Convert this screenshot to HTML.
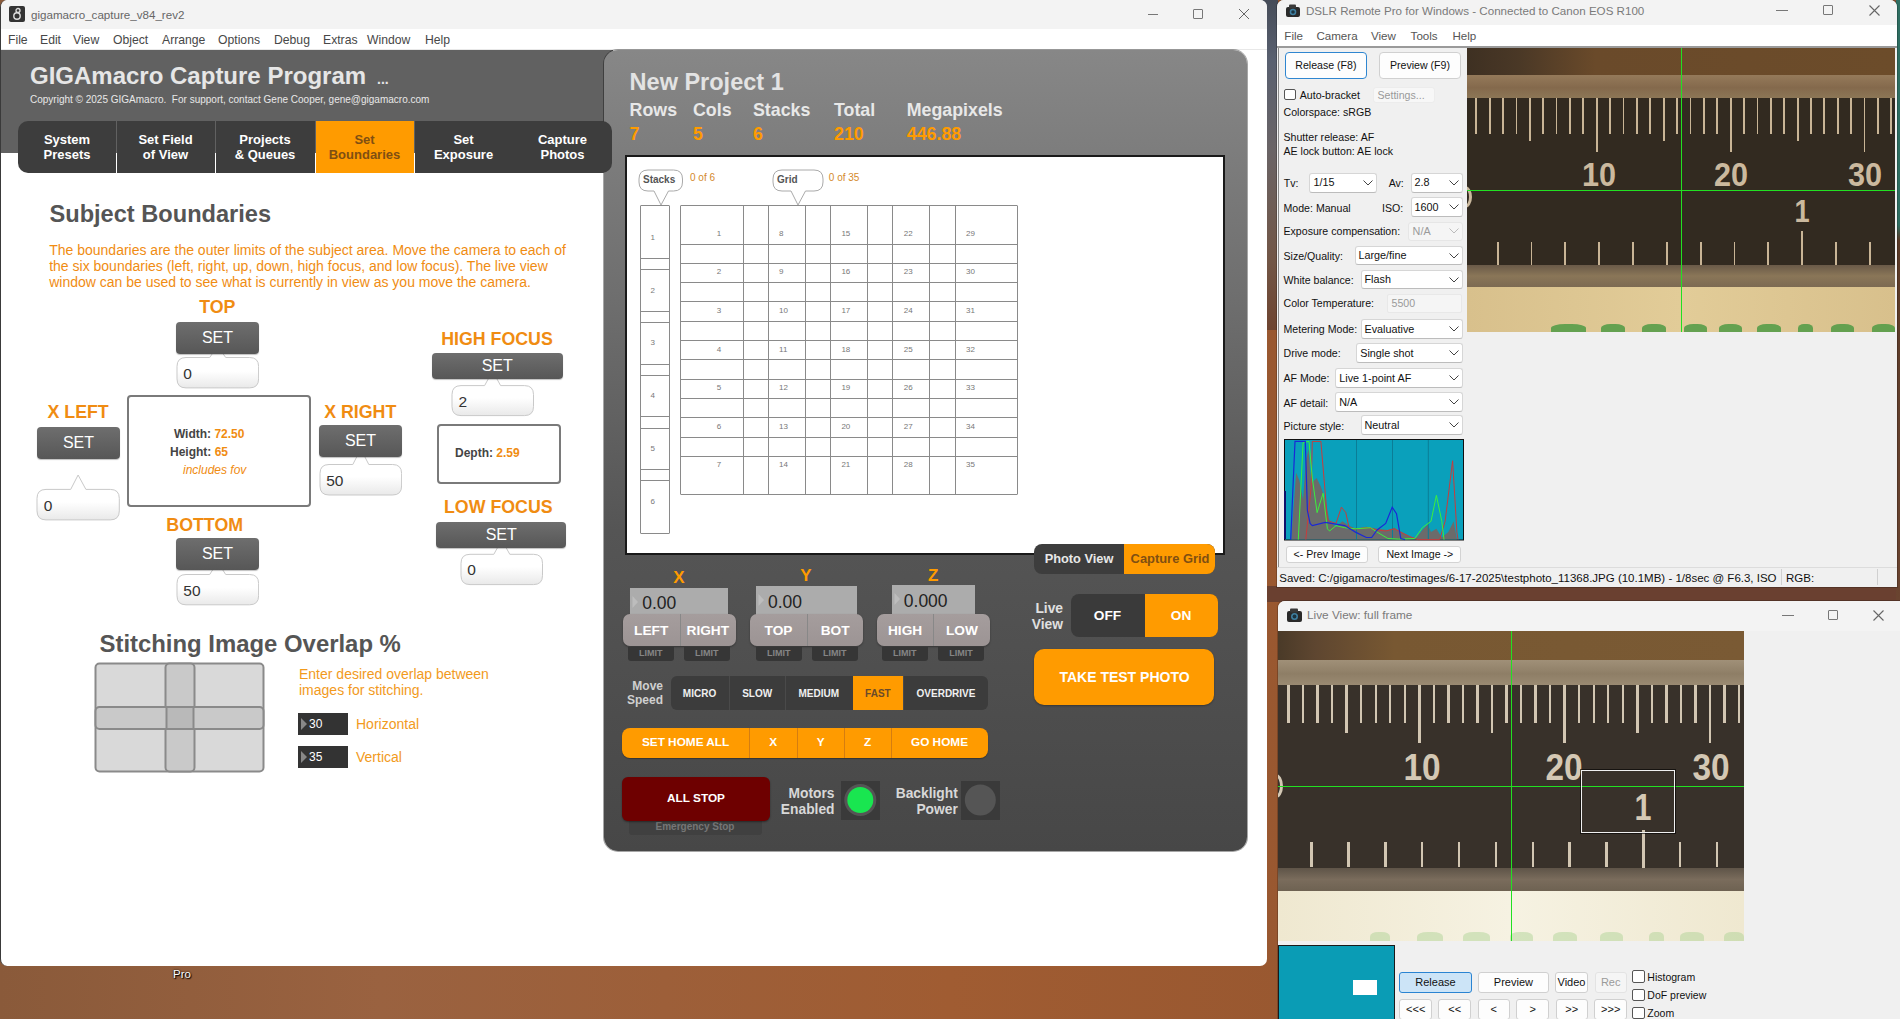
<!DOCTYPE html><html><head><meta charset="utf-8"><style>
*{box-sizing:border-box;margin:0;padding:0}
html,body{width:1900px;height:1019px;overflow:hidden}
body{position:relative;font-family:"Liberation Sans",sans-serif;background:#7e4e30}
.a{position:absolute}
.t{white-space:nowrap;line-height:1}
</style></head><body>
<div class="a" style="left:0px;top:0px;width:1900px;height:1019px;background:linear-gradient(90deg,#8a5a3a 0%,#9a6240 20%,#a05c32 50%,#94552f 80%,#8a5232 100%)"></div>
<div class="a" style="left:1267px;top:586px;width:633px;height:16px;background:#6a4030"></div>
<div class="a" style="left:1255px;top:0px;width:23px;height:330px;background:linear-gradient(180deg,#464c58 0px,#596070 60px,#6a6466 150px,#725646 260px,#6e4430 330px)"></div>
<div class="a t" style="left:173.0px;top:968.9px;font-size:11.5px;color:#fff;text-shadow:0 0 2px #000,1px 1px 1px #000">Pro</div>
<div class="a" style="left:0px;top:0px;width:1267px;height:966px;background:#fff;border-radius:7px;border-left:1px solid #3a3a3a;overflow:hidden"></div>
<div class="a" style="left:1px;top:0px;width:1266px;height:29.5px;background:#f3f3f3;border-radius:7px 7px 0 0"></div>
<div class="a" style="left:9px;top:6px;width:16px;height:16px;background:#333;border-radius:2px"></div>
<svg class="a" style="left:9px;top:6px" width="16" height="16"><circle cx="8" cy="10" r="3.2" fill="none" stroke="#ddd" stroke-width="1.4"/><circle cx="9" cy="4.5" r="2" fill="none" stroke="#ddd" stroke-width="1.3"/></svg>
<div class="a t" style="left:31.0px;top:9.1px;font-size:11.6px;color:#666">gigamacro_capture_v84_rev2</div>
<div class="a" style="left:1148px;top:14px;width:10px;height:1px;background:#777"></div>
<div class="a" style="left:1193px;top:9px;width:10px;height:10px;border:1px solid #777;border-radius:1px"></div>
<svg class="a" style="left:1239px;top:9px" width="10" height="10"><path d="M0 0L10 10M10 0L0 10" stroke="#666" stroke-width="1"/></svg>
<div class="a" style="left:1px;top:29px;width:1266px;height:20px;background:#fff"></div>
<div class="a t" style="left:8.0px;top:33.7px;font-size:12.2px;color:#474747">File</div>
<div class="a t" style="left:40.0px;top:33.7px;font-size:12.2px;color:#474747">Edit</div>
<div class="a t" style="left:73.0px;top:33.7px;font-size:12.2px;color:#474747">View</div>
<div class="a t" style="left:113.0px;top:33.7px;font-size:12.2px;color:#474747">Object</div>
<div class="a t" style="left:162.0px;top:33.7px;font-size:12.2px;color:#474747">Arrange</div>
<div class="a t" style="left:218.0px;top:33.7px;font-size:12.2px;color:#474747">Options</div>
<div class="a t" style="left:274.0px;top:33.7px;font-size:12.2px;color:#474747">Debug</div>
<div class="a t" style="left:323.0px;top:33.7px;font-size:12.2px;color:#474747">Extras</div>
<div class="a t" style="left:367.0px;top:33.7px;font-size:12.2px;color:#474747">Window</div>
<div class="a t" style="left:425.0px;top:33.7px;font-size:12.2px;color:#474747">Help</div>
<div class="a" style="left:1px;top:49px;width:1266px;height:1px;background:#e8e8e8"></div>
<div class="a" style="left:1px;top:50px;width:612px;height:103px;background:#616161"></div>
<div class="a t" style="left:30.0px;top:63.9px;font-size:24px;font-weight:bold;color:#e6e6e6">GIGAmacro Capture Program</div>
<div class="a t" style="left:377.0px;top:72.3px;font-size:14px;font-weight:bold;color:#e6e6e6">...</div>
<div class="a t" style="left:30.0px;top:94.9px;font-size:10px;color:#e8e8e8">Copyright &copy; 2025 GIGAmacro.&nbsp; For support, contact Gene Cooper, gene@gigamacro.com</div>
<div class="a" style="left:18px;top:121px;width:98px;height:52px;background:#3d3d3d;border-radius:10px 0 0 10px;"></div>
<div class="a t" style="left:17.0px;top:133.1px;width:100px;text-align:center;font-size:13px;font-weight:bold;color:#fff">System</div>
<div class="a t" style="left:17.0px;top:148.2px;width:100px;text-align:center;font-size:13px;font-weight:bold;color:#fff">Presets</div>
<div class="a" style="left:117px;top:121px;width:98px;height:52px;background:#3d3d3d;"></div>
<div class="a t" style="left:115.5px;top:133.1px;width:100px;text-align:center;font-size:13px;font-weight:bold;color:#fff">Set Field</div>
<div class="a t" style="left:115.5px;top:148.2px;width:100px;text-align:center;font-size:13px;font-weight:bold;color:#fff">of View</div>
<div class="a" style="left:216px;top:121px;width:99px;height:52px;background:#3d3d3d;"></div>
<div class="a t" style="left:215.0px;top:133.1px;width:100px;text-align:center;font-size:13px;font-weight:bold;color:#fff">Projects</div>
<div class="a t" style="left:215.0px;top:148.2px;width:100px;text-align:center;font-size:13px;font-weight:bold;color:#fff">&amp; Queues</div>
<div class="a" style="left:316px;top:121px;width:98px;height:52px;background:#ff9b00;"></div>
<div class="a t" style="left:314.5px;top:133.1px;width:100px;text-align:center;font-size:13px;font-weight:bold;color:#7f4f12">Set</div>
<div class="a t" style="left:314.5px;top:148.2px;width:100px;text-align:center;font-size:13px;font-weight:bold;color:#7f4f12">Boundaries</div>
<div class="a" style="left:415px;top:121px;width:98px;height:52px;background:#3d3d3d;"></div>
<div class="a t" style="left:413.5px;top:133.1px;width:100px;text-align:center;font-size:13px;font-weight:bold;color:#fff">Set</div>
<div class="a t" style="left:413.5px;top:148.2px;width:100px;text-align:center;font-size:13px;font-weight:bold;color:#fff">Exposure</div>
<div class="a" style="left:514px;top:121px;width:98px;height:52px;background:#3d3d3d;border-radius:0 10px 10px 0;"></div>
<div class="a t" style="left:512.5px;top:133.1px;width:100px;text-align:center;font-size:13px;font-weight:bold;color:#fff">Capture</div>
<div class="a t" style="left:512.5px;top:148.2px;width:100px;text-align:center;font-size:13px;font-weight:bold;color:#fff">Photos</div>
<div class="a t" style="left:49.5px;top:203.2px;font-size:23.6px;font-weight:bold;color:#555">Subject Boundaries</div>
<div class="a t" style="left:49.2px;top:243.0px;font-size:14px;color:#f08c12">The boundaries are the outer limits of the subject area. Move the camera to each of</div>
<div class="a t" style="left:49.2px;top:259.0px;font-size:14px;color:#f08c12">the six boundaries (left, right, up, down, high focus, and low focus). The live view</div>
<div class="a t" style="left:49.2px;top:275.0px;font-size:14px;color:#f08c12">window can be used to see what is currently in view as you move the camera.</div>
<div class="a t" style="left:117.3px;top:298.5px;width:200px;text-align:center;font-size:17.8px;font-weight:bold;color:#f08c12">TOP</div>
<svg class="a" style="left:175.8px;top:345px" width="83.59999999999997" height="43.89999999999998"><defs><linearGradient id="bg176357" x1="0" y1="0" x2="0" y2="1"><stop offset="0.6" stop-color="#fff"/><stop offset="1" stop-color="#e9e9e9"/></linearGradient></defs><path d="M10.0 12.5 L33.7 12.5 L41.7 1.0 L49.7 12.5 L73.6 12.5 Q82.6 12.5 82.6 21.5 L82.6 33.9 Q82.6 42.9 73.6 42.9 L10.0 42.9 Q1.0 42.9 1.0 33.9 L1.0 21.5 Q1.0 12.5 10.0 12.5 Z" fill="url(#bg176357)" stroke="#c9c9c9" stroke-width="1"/></svg>
<div class="a t" style="left:183.3px;top:365.6px;font-size:15.5px;color:#333">0</div>
<div class="a" style="left:176px;top:322px;width:83px;height:32px;background:linear-gradient(180deg,#6e6e6e,#575757);border-radius:4px;box-shadow:0 1px 1px rgba(0,0,0,.25)"></div>
<div class="a t" style="left:167.5px;top:330.2px;width:100px;text-align:center;font-size:16px;color:#fff">SET</div>
<div class="a t" style="left:-21.9px;top:403.7px;width:200px;text-align:center;font-size:17.8px;font-weight:bold;color:#f08c12">X LEFT</div>
<div class="a" style="left:37px;top:427px;width:83px;height:32px;background:linear-gradient(180deg,#6e6e6e,#575757);border-radius:4px;box-shadow:0 1px 1px rgba(0,0,0,.25)"></div>
<div class="a t" style="left:28.5px;top:435.2px;width:100px;text-align:center;font-size:16px;color:#fff">SET</div>
<svg class="a" style="left:36.3px;top:474.3px" width="84.3" height="46.900000000000034"><defs><linearGradient id="bg37489" x1="0" y1="0" x2="0" y2="1"><stop offset="0.6" stop-color="#fff"/><stop offset="1" stop-color="#e9e9e9"/></linearGradient></defs><path d="M10.0 15.4 L34.7 15.4 L42.1 1.0 L49.9 15.4 L74.3 15.4 Q83.3 15.4 83.3 24.4 L83.3 36.9 Q83.3 45.9 74.3 45.9 L10.0 45.9 Q1.0 45.9 1.0 36.9 L1.0 24.4 Q1.0 15.4 10.0 15.4 Z" fill="url(#bg37489)" stroke="#c9c9c9" stroke-width="1"/></svg>
<div class="a t" style="left:43.8px;top:497.9px;font-size:15.5px;color:#333">0</div>
<div class="a" style="left:126.6px;top:395.4px;width:184px;height:112px;border:2px solid #7a7a7a;border-radius:4px"></div>
<div class="a t" style="left:173.9px;top:428.3px;font-size:12px;font-weight:bold;color:#444">Width: <span style="color:#f08c12">72.50</span></div>
<div class="a t" style="left:170.0px;top:446.1px;font-size:12px;font-weight:bold;color:#444">Height: <span style="color:#f08c12">65</span></div>
<div class="a t" style="left:183.0px;top:463.5px;font-size:12px;font-style:italic;color:#f08c12">includes fov</div>
<div class="a t" style="left:260.2px;top:403.7px;width:200px;text-align:center;font-size:17.8px;font-weight:bold;color:#f08c12">X RIGHT</div>
<svg class="a" style="left:318.7px;top:448px" width="83.60000000000002" height="48"><defs><linearGradient id="bg319464" x1="0" y1="0" x2="0" y2="1"><stop offset="0.6" stop-color="#fff"/><stop offset="1" stop-color="#e9e9e9"/></linearGradient></defs><path d="M10.0 16.5 L33.8 16.5 L41.8 1.0 L49.8 16.5 L73.6 16.5 Q82.6 16.5 82.6 25.5 L82.6 38.0 Q82.6 47.0 73.6 47.0 L10.0 47.0 Q1.0 47.0 1.0 38.0 L1.0 25.5 Q1.0 16.5 10.0 16.5 Z" fill="url(#bg319464)" stroke="#c9c9c9" stroke-width="1"/></svg>
<div class="a t" style="left:326.2px;top:472.7px;font-size:15.5px;color:#333">50</div>
<div class="a" style="left:319px;top:425px;width:83px;height:32px;background:linear-gradient(180deg,#6e6e6e,#575757);border-radius:4px;box-shadow:0 1px 1px rgba(0,0,0,.25)"></div>
<div class="a t" style="left:310.5px;top:433.2px;width:100px;text-align:center;font-size:16px;color:#fff">SET</div>
<div class="a t" style="left:104.7px;top:516.5px;width:200px;text-align:center;font-size:17.8px;font-weight:bold;color:#f08c12">BOTTOM</div>
<svg class="a" style="left:175.8px;top:561px" width="83.59999999999997" height="44.799999999999955"><defs><linearGradient id="bg176574" x1="0" y1="0" x2="0" y2="1"><stop offset="0.6" stop-color="#fff"/><stop offset="1" stop-color="#e9e9e9"/></linearGradient></defs><path d="M10.0 13.5 L33.7 13.5 L41.7 1.0 L49.7 13.5 L73.6 13.5 Q82.6 13.5 82.6 22.5 L82.6 34.8 Q82.6 43.8 73.6 43.8 L10.0 43.8 Q1.0 43.8 1.0 34.8 L1.0 22.5 Q1.0 13.5 10.0 13.5 Z" fill="url(#bg176574)" stroke="#c9c9c9" stroke-width="1"/></svg>
<div class="a t" style="left:183.3px;top:582.6px;font-size:15.5px;color:#333">50</div>
<div class="a" style="left:176px;top:538px;width:83px;height:32px;background:linear-gradient(180deg,#6e6e6e,#575757);border-radius:4px;box-shadow:0 1px 1px rgba(0,0,0,.25)"></div>
<div class="a t" style="left:167.5px;top:546.2px;width:100px;text-align:center;font-size:16px;color:#fff">SET</div>
<div class="a t" style="left:397.0px;top:331.2px;width:200px;text-align:center;font-size:17.8px;font-weight:bold;color:#f08c12">HIGH FOCUS</div>
<svg class="a" style="left:450.9px;top:370px" width="83.5" height="46.60000000000002"><defs><linearGradient id="bg451385" x1="0" y1="0" x2="0" y2="1"><stop offset="0.6" stop-color="#fff"/><stop offset="1" stop-color="#e9e9e9"/></linearGradient></defs><path d="M10.0 15.6 L33.6 15.6 L41.6 1.0 L49.6 15.6 L73.5 15.6 Q82.5 15.6 82.5 24.6 L82.5 36.6 Q82.5 45.6 73.5 45.6 L10.0 45.6 Q1.0 45.6 1.0 36.6 L1.0 24.6 Q1.0 15.6 10.0 15.6 Z" fill="url(#bg451385)" stroke="#c9c9c9" stroke-width="1"/></svg>
<div class="a t" style="left:458.4px;top:393.5px;font-size:15.5px;color:#333">2</div>
<div class="a" style="left:432px;top:353px;width:130.5px;height:26px;background:linear-gradient(180deg,#6e6e6e,#575757);border-radius:4px;box-shadow:0 1px 1px rgba(0,0,0,.25)"></div>
<div class="a t" style="left:447.2px;top:358.2px;width:100px;text-align:center;font-size:16px;color:#fff">SET</div>
<div class="a" style="left:436.5px;top:424.4px;width:124px;height:60px;border:2px solid #7a7a7a;border-radius:4px"></div>
<div class="a t" style="left:455.0px;top:447.1px;font-size:12px;font-weight:bold;color:#444">Depth: <span style="color:#f08c12">2.59</span></div>
<div class="a t" style="left:398.3px;top:499.2px;width:200px;text-align:center;font-size:17.8px;font-weight:bold;color:#f08c12">LOW FOCUS</div>
<svg class="a" style="left:459.7px;top:539px" width="83.50000000000006" height="46.60000000000002"><defs><linearGradient id="bg460554" x1="0" y1="0" x2="0" y2="1"><stop offset="0.6" stop-color="#fff"/><stop offset="1" stop-color="#e9e9e9"/></linearGradient></defs><path d="M10.0 15.3 L33.8 15.3 L41.8 1.0 L49.8 15.3 L73.5 15.3 Q82.5 15.3 82.5 24.3 L82.5 36.6 Q82.5 45.6 73.5 45.6 L10.0 45.6 Q1.0 45.6 1.0 36.6 L1.0 24.3 Q1.0 15.3 10.0 15.3 Z" fill="url(#bg460554)" stroke="#c9c9c9" stroke-width="1"/></svg>
<div class="a t" style="left:467.2px;top:562.4px;font-size:15.5px;color:#333">0</div>
<div class="a" style="left:436px;top:522.3px;width:130.39999999999998px;height:25.40000000000009px;background:linear-gradient(180deg,#6e6e6e,#575757);border-radius:4px;box-shadow:0 1px 1px rgba(0,0,0,.25)"></div>
<div class="a t" style="left:451.2px;top:527.2px;width:100px;text-align:center;font-size:16px;color:#fff">SET</div>
<div class="a t" style="left:99.5px;top:632.4px;font-size:23.9px;font-weight:bold;color:#555">Stitching Image Overlap %</div>
<svg class="a" style="left:94px;top:662px" width="172" height="112">
<rect x="1.5" y="1.5" width="168" height="108" rx="4" fill="#d9d9d9" stroke="#8a8a8a" stroke-width="2"/>
<rect x="71.5" y="1.5" width="29" height="108" rx="4" fill="#c9c9c9" stroke="#8a8a8a" stroke-width="2"/>
<rect x="1.5" y="45" width="168" height="22" rx="4" fill="#c9c9c9" stroke="#8a8a8a" stroke-width="2"/>
<rect x="72.5" y="46" width="27" height="20" fill="#b9b9b9"/>
<line x1="72.5" y1="45" x2="72.5" y2="67" stroke="#8a8a8a" stroke-width="2"/>
<line x1="99.5" y1="45" x2="99.5" y2="67" stroke="#8a8a8a" stroke-width="2"/>
</svg>
<div class="a t" style="left:299.0px;top:667.2px;font-size:14px;color:#f29a1c">Enter desired overlap between</div>
<div class="a t" style="left:299.0px;top:682.8px;font-size:14px;color:#f29a1c">images for stitching.</div>
<div class="a" style="left:298px;top:713px;width:50px;height:22px;background:#333"></div>
<svg class="a" style="left:300px;top:718px" width="8" height="12"><path d="M1 0L7 6L1 12Z" fill="#888"/></svg>
<div class="a t" style="left:309.0px;top:718.1px;font-size:12px;color:#fff">30</div>
<div class="a t" style="left:356.0px;top:717.2px;font-size:14px;color:#f29a1c">Horizontal</div>
<div class="a" style="left:298px;top:746px;width:50px;height:22px;background:#333"></div>
<svg class="a" style="left:300px;top:751px" width="8" height="12"><path d="M1 0L7 6L1 12Z" fill="#888"/></svg>
<div class="a t" style="left:309.0px;top:751.1px;font-size:12px;color:#fff">35</div>
<div class="a t" style="left:356.0px;top:750.2px;font-size:14px;color:#f29a1c">Vertical</div>
<div class="a" style="left:604px;top:50px;width:643px;height:801px;background:linear-gradient(180deg,#878787 0%,#6f6f6f 30%,#555 60%,#474747 100%);border-radius:14px;box-shadow:0 0 0 1px rgba(0,0,0,.35)"></div>
<div class="a" style="left:513px;top:121px;width:99px;height:52px;background:#3d3d3d;border-radius:0 10px 10px 0"></div>
<div class="a t" style="left:512.5px;top:133.1px;width:100px;text-align:center;font-size:13px;font-weight:bold;color:#fff">Capture</div>
<div class="a t" style="left:512.5px;top:148.2px;width:100px;text-align:center;font-size:13px;font-weight:bold;color:#fff">Photos</div>
<div class="a t" style="left:629.6px;top:70.6px;font-size:23.5px;font-weight:bold;color:#e3e3e3">New Project 1</div>
<div class="a t" style="left:629.6px;top:101.9px;font-size:17.8px;font-weight:bold;color:#e8e8e8">Rows</div>
<div class="a t" style="left:629.6px;top:125.9px;font-size:17.8px;font-weight:bold;color:#ff9b00">7</div>
<div class="a t" style="left:693.0px;top:101.9px;font-size:17.8px;font-weight:bold;color:#e8e8e8">Cols</div>
<div class="a t" style="left:693.0px;top:125.9px;font-size:17.8px;font-weight:bold;color:#ff9b00">5</div>
<div class="a t" style="left:753.0px;top:101.9px;font-size:17.8px;font-weight:bold;color:#e8e8e8">Stacks</div>
<div class="a t" style="left:753.0px;top:125.9px;font-size:17.8px;font-weight:bold;color:#ff9b00">6</div>
<div class="a t" style="left:834.0px;top:101.9px;font-size:17.8px;font-weight:bold;color:#e8e8e8">Total</div>
<div class="a t" style="left:834.0px;top:125.9px;font-size:17.8px;font-weight:bold;color:#ff9b00">210</div>
<div class="a t" style="left:906.8px;top:101.9px;font-size:17.8px;font-weight:bold;color:#e8e8e8">Megapixels</div>
<div class="a t" style="left:906.8px;top:125.9px;font-size:17.8px;font-weight:bold;color:#ff9b00">446.88</div>
<div class="a" style="left:625px;top:155px;width:600px;height:400px;background:#fff;border:2px solid #1a1a1a"></div>
<svg class="a" style="left:637.5px;top:169px" width="45.5" height="37"><path d="M10.0 1 L35.5 1 Q44.5 1 44.5 10 L44.5 13 Q44.5 22 35.5 22 L30.5 22 L23.0 36 L16.0 22 L10.0 22 Q1.0 22 1.0 13 L1.0 10 Q1.0 1 10.0 1 Z" fill="#fff" stroke="#aaa" stroke-width="1"/></svg>
<div class="a t" style="left:643.0px;top:174.6px;font-size:10px;font-weight:bold;color:#555">Stacks</div>
<svg class="a" style="left:771.5px;top:169px" width="52.0" height="37"><path d="M10.0 1 L42.0 1 Q51.0 1 51.0 10 L51.0 13 Q51.0 22 42.0 22 L33.5 22 L26.0 36 L19.0 22 L10.0 22 Q1.0 22 1.0 13 L1.0 10 Q1.0 1 10.0 1 Z" fill="#fff" stroke="#aaa" stroke-width="1"/></svg>
<div class="a t" style="left:777.0px;top:174.6px;font-size:10px;font-weight:bold;color:#555">Grid</div>
<div class="a t" style="left:690.0px;top:172.7px;font-size:10px;color:#d4892a">0 of 6</div>
<div class="a t" style="left:828.8px;top:172.7px;font-size:10px;color:#d4892a">0 of 35</div>
<div class="a" style="left:640px;top:205.0px;width:29.5px;height:65px;border:1px solid #8a8a8a;border-radius:1px"></div>
<div class="a" style="left:640px;top:257.85px;width:29.5px;height:65px;border:1px solid #8a8a8a;border-radius:1px"></div>
<div class="a" style="left:640px;top:310.7px;width:29.5px;height:65px;border:1px solid #8a8a8a;border-radius:1px"></div>
<div class="a" style="left:640px;top:363.55px;width:29.5px;height:65px;border:1px solid #8a8a8a;border-radius:1px"></div>
<div class="a" style="left:640px;top:416.4px;width:29.5px;height:65px;border:1px solid #8a8a8a;border-radius:1px"></div>
<div class="a" style="left:640px;top:469.25px;width:29.5px;height:65px;border:1px solid #8a8a8a;border-radius:1px"></div>
<div class="a t" style="left:642.8px;top:233.7px;width:20px;text-align:center;font-size:8px;color:#777">1</div>
<div class="a t" style="left:642.8px;top:286.5px;width:20px;text-align:center;font-size:8px;color:#777">2</div>
<div class="a t" style="left:642.8px;top:339.4px;width:20px;text-align:center;font-size:8px;color:#777">3</div>
<div class="a t" style="left:642.8px;top:392.2px;width:20px;text-align:center;font-size:8px;color:#777">4</div>
<div class="a t" style="left:642.8px;top:445.1px;width:20px;text-align:center;font-size:8px;color:#777">5</div>
<div class="a t" style="left:642.8px;top:497.9px;width:20px;text-align:center;font-size:8px;color:#777">6</div>
<div class="a" style="left:680.2px;top:205.0px;width:88.5px;height:58.8px;border:1px solid #8a8a8a;border-radius:1px"></div>
<div class="a" style="left:680.2px;top:243.6px;width:88.5px;height:58.8px;border:1px solid #8a8a8a;border-radius:1px"></div>
<div class="a" style="left:680.2px;top:282.2px;width:88.5px;height:58.8px;border:1px solid #8a8a8a;border-radius:1px"></div>
<div class="a" style="left:680.2px;top:320.8px;width:88.5px;height:58.8px;border:1px solid #8a8a8a;border-radius:1px"></div>
<div class="a" style="left:680.2px;top:359.4px;width:88.5px;height:58.8px;border:1px solid #8a8a8a;border-radius:1px"></div>
<div class="a" style="left:680.2px;top:398.0px;width:88.5px;height:58.8px;border:1px solid #8a8a8a;border-radius:1px"></div>
<div class="a" style="left:680.2px;top:436.6px;width:88.5px;height:58.8px;border:1px solid #8a8a8a;border-radius:1px"></div>
<div class="a" style="left:742.5px;top:205.0px;width:88.5px;height:58.8px;border:1px solid #8a8a8a;border-radius:1px"></div>
<div class="a" style="left:742.5px;top:243.6px;width:88.5px;height:58.8px;border:1px solid #8a8a8a;border-radius:1px"></div>
<div class="a" style="left:742.5px;top:282.2px;width:88.5px;height:58.8px;border:1px solid #8a8a8a;border-radius:1px"></div>
<div class="a" style="left:742.5px;top:320.8px;width:88.5px;height:58.8px;border:1px solid #8a8a8a;border-radius:1px"></div>
<div class="a" style="left:742.5px;top:359.4px;width:88.5px;height:58.8px;border:1px solid #8a8a8a;border-radius:1px"></div>
<div class="a" style="left:742.5px;top:398.0px;width:88.5px;height:58.8px;border:1px solid #8a8a8a;border-radius:1px"></div>
<div class="a" style="left:742.5px;top:436.6px;width:88.5px;height:58.8px;border:1px solid #8a8a8a;border-radius:1px"></div>
<div class="a" style="left:804.8px;top:205.0px;width:88.5px;height:58.8px;border:1px solid #8a8a8a;border-radius:1px"></div>
<div class="a" style="left:804.8px;top:243.6px;width:88.5px;height:58.8px;border:1px solid #8a8a8a;border-radius:1px"></div>
<div class="a" style="left:804.8px;top:282.2px;width:88.5px;height:58.8px;border:1px solid #8a8a8a;border-radius:1px"></div>
<div class="a" style="left:804.8px;top:320.8px;width:88.5px;height:58.8px;border:1px solid #8a8a8a;border-radius:1px"></div>
<div class="a" style="left:804.8px;top:359.4px;width:88.5px;height:58.8px;border:1px solid #8a8a8a;border-radius:1px"></div>
<div class="a" style="left:804.8px;top:398.0px;width:88.5px;height:58.8px;border:1px solid #8a8a8a;border-radius:1px"></div>
<div class="a" style="left:804.8px;top:436.6px;width:88.5px;height:58.8px;border:1px solid #8a8a8a;border-radius:1px"></div>
<div class="a" style="left:867.1px;top:205.0px;width:88.5px;height:58.8px;border:1px solid #8a8a8a;border-radius:1px"></div>
<div class="a" style="left:867.1px;top:243.6px;width:88.5px;height:58.8px;border:1px solid #8a8a8a;border-radius:1px"></div>
<div class="a" style="left:867.1px;top:282.2px;width:88.5px;height:58.8px;border:1px solid #8a8a8a;border-radius:1px"></div>
<div class="a" style="left:867.1px;top:320.8px;width:88.5px;height:58.8px;border:1px solid #8a8a8a;border-radius:1px"></div>
<div class="a" style="left:867.1px;top:359.4px;width:88.5px;height:58.8px;border:1px solid #8a8a8a;border-radius:1px"></div>
<div class="a" style="left:867.1px;top:398.0px;width:88.5px;height:58.8px;border:1px solid #8a8a8a;border-radius:1px"></div>
<div class="a" style="left:867.1px;top:436.6px;width:88.5px;height:58.8px;border:1px solid #8a8a8a;border-radius:1px"></div>
<div class="a" style="left:929.4px;top:205.0px;width:88.5px;height:58.8px;border:1px solid #8a8a8a;border-radius:1px"></div>
<div class="a" style="left:929.4px;top:243.6px;width:88.5px;height:58.8px;border:1px solid #8a8a8a;border-radius:1px"></div>
<div class="a" style="left:929.4px;top:282.2px;width:88.5px;height:58.8px;border:1px solid #8a8a8a;border-radius:1px"></div>
<div class="a" style="left:929.4px;top:320.8px;width:88.5px;height:58.8px;border:1px solid #8a8a8a;border-radius:1px"></div>
<div class="a" style="left:929.4px;top:359.4px;width:88.5px;height:58.8px;border:1px solid #8a8a8a;border-radius:1px"></div>
<div class="a" style="left:929.4px;top:398.0px;width:88.5px;height:58.8px;border:1px solid #8a8a8a;border-radius:1px"></div>
<div class="a" style="left:929.4px;top:436.6px;width:88.5px;height:58.8px;border:1px solid #8a8a8a;border-radius:1px"></div>
<div class="a t" style="left:716.8px;top:229.7px;font-size:8px;color:#777">1</div>
<div class="a t" style="left:716.8px;top:268.3px;font-size:8px;color:#777">2</div>
<div class="a t" style="left:716.8px;top:306.9px;font-size:8px;color:#777">3</div>
<div class="a t" style="left:716.8px;top:345.5px;font-size:8px;color:#777">4</div>
<div class="a t" style="left:716.8px;top:384.1px;font-size:8px;color:#777">5</div>
<div class="a t" style="left:716.8px;top:422.7px;font-size:8px;color:#777">6</div>
<div class="a t" style="left:716.8px;top:461.3px;font-size:8px;color:#777">7</div>
<div class="a t" style="left:779.1px;top:229.7px;font-size:8px;color:#777">8</div>
<div class="a t" style="left:779.1px;top:268.3px;font-size:8px;color:#777">9</div>
<div class="a t" style="left:779.1px;top:306.9px;font-size:8px;color:#777">10</div>
<div class="a t" style="left:779.1px;top:345.5px;font-size:8px;color:#777">11</div>
<div class="a t" style="left:779.1px;top:384.1px;font-size:8px;color:#777">12</div>
<div class="a t" style="left:779.1px;top:422.7px;font-size:8px;color:#777">13</div>
<div class="a t" style="left:779.1px;top:461.3px;font-size:8px;color:#777">14</div>
<div class="a t" style="left:841.4px;top:229.7px;font-size:8px;color:#777">15</div>
<div class="a t" style="left:841.4px;top:268.3px;font-size:8px;color:#777">16</div>
<div class="a t" style="left:841.4px;top:306.9px;font-size:8px;color:#777">17</div>
<div class="a t" style="left:841.4px;top:345.5px;font-size:8px;color:#777">18</div>
<div class="a t" style="left:841.4px;top:384.1px;font-size:8px;color:#777">19</div>
<div class="a t" style="left:841.4px;top:422.7px;font-size:8px;color:#777">20</div>
<div class="a t" style="left:841.4px;top:461.3px;font-size:8px;color:#777">21</div>
<div class="a t" style="left:903.7px;top:229.7px;font-size:8px;color:#777">22</div>
<div class="a t" style="left:903.7px;top:268.3px;font-size:8px;color:#777">23</div>
<div class="a t" style="left:903.7px;top:306.9px;font-size:8px;color:#777">24</div>
<div class="a t" style="left:903.7px;top:345.5px;font-size:8px;color:#777">25</div>
<div class="a t" style="left:903.7px;top:384.1px;font-size:8px;color:#777">26</div>
<div class="a t" style="left:903.7px;top:422.7px;font-size:8px;color:#777">27</div>
<div class="a t" style="left:903.7px;top:461.3px;font-size:8px;color:#777">28</div>
<div class="a t" style="left:966.0px;top:229.7px;font-size:8px;color:#777">29</div>
<div class="a t" style="left:966.0px;top:268.3px;font-size:8px;color:#777">30</div>
<div class="a t" style="left:966.0px;top:306.9px;font-size:8px;color:#777">31</div>
<div class="a t" style="left:966.0px;top:345.5px;font-size:8px;color:#777">32</div>
<div class="a t" style="left:966.0px;top:384.1px;font-size:8px;color:#777">33</div>
<div class="a t" style="left:966.0px;top:422.7px;font-size:8px;color:#777">34</div>
<div class="a t" style="left:966.0px;top:461.3px;font-size:8px;color:#777">35</div>
<div class="a" style="left:1034.2px;top:544.2px;width:181.3px;height:29.8px;background:#3d3d3d;border-radius:8px;overflow:hidden"><div class="a" style="left:90.3px;top:0;width:91px;height:30px;background:#ff9b00"></div></div>
<div class="a t" style="left:1029.0px;top:552.7px;width:100px;text-align:center;font-size:12.8px;font-weight:bold;color:#e8e8e8">Photo View</div>
<div class="a t" style="left:1120.0px;top:552.7px;width:100px;text-align:center;font-size:12.9px;font-weight:bold;color:#7f4f12">Capture Grid</div>
<div class="a t" style="left:648.8px;top:569.0px;width:60px;text-align:center;font-size:17px;font-weight:bold;color:#ff9b00">X</div>
<div class="a" style="left:630.2px;top:588px;width:97.59999999999991px;height:27.600000000000023px;background:#acacac"></div>
<svg class="a" style="left:632.2px;top:595px" width="7" height="14"><path d="M0.5 1L6 7L0.5 13Z" fill="#bdbdbd"/></svg>
<div class="a t" style="left:642.2px;top:594.6px;font-size:17.5px;color:#222">0.00</div>
<div class="a" style="left:623px;top:614px;width:113px;height:32px;background:linear-gradient(180deg,#a59d9d,#9c9494);border-radius:7px;box-shadow:0 1px 2px rgba(0,0,0,.35)"></div>
<div class="a" style="left:679.5px;top:614px;width:1px;height:32px;background:#888"></div>
<div class="a t" style="left:611.2px;top:623.8px;width:80px;text-align:center;font-size:13.7px;font-weight:bold;color:#fff">LEFT</div>
<div class="a t" style="left:667.8px;top:623.8px;width:80px;text-align:center;font-size:13.7px;font-weight:bold;color:#fff">RIGHT</div>
<div class="a" style="left:627.8px;top:647px;width:45.80000000000007px;height:13.5px;background:#363636;border-radius:0 0 3px 3px"></div>
<div class="a t" style="left:620.7px;top:649.4px;width:60px;text-align:center;font-size:9px;font-weight:bold;color:#858585">LIMIT</div>
<div class="a" style="left:683.7px;top:647px;width:45.89999999999998px;height:13.5px;background:#363636;border-radius:0 0 3px 3px"></div>
<div class="a t" style="left:676.7px;top:649.4px;width:60px;text-align:center;font-size:9px;font-weight:bold;color:#858585">LIMIT</div>
<div class="a t" style="left:776.0px;top:567.3px;width:60px;text-align:center;font-size:17px;font-weight:bold;color:#ff9b00">Y</div>
<div class="a" style="left:756px;top:585.8px;width:101px;height:29.800000000000068px;background:#acacac"></div>
<svg class="a" style="left:758px;top:592.8px" width="7" height="14"><path d="M0.5 1L6 7L0.5 13Z" fill="#bdbdbd"/></svg>
<div class="a t" style="left:768.0px;top:593.5px;font-size:17.5px;color:#222">0.00</div>
<div class="a" style="left:750px;top:614px;width:113.29999999999995px;height:32px;background:linear-gradient(180deg,#a59d9d,#9c9494);border-radius:7px;box-shadow:0 1px 2px rgba(0,0,0,.35)"></div>
<div class="a" style="left:807px;top:614px;width:1px;height:32px;background:#888"></div>
<div class="a t" style="left:738.5px;top:623.8px;width:80px;text-align:center;font-size:13.7px;font-weight:bold;color:#fff">TOP</div>
<div class="a t" style="left:795.1px;top:623.8px;width:80px;text-align:center;font-size:13.7px;font-weight:bold;color:#fff">BOT</div>
<div class="a" style="left:756px;top:647px;width:45.5px;height:13.5px;background:#363636;border-radius:0 0 3px 3px"></div>
<div class="a t" style="left:748.8px;top:649.4px;width:60px;text-align:center;font-size:9px;font-weight:bold;color:#858585">LIMIT</div>
<div class="a" style="left:811.9px;top:647px;width:45.80000000000007px;height:13.5px;background:#363636;border-radius:0 0 3px 3px"></div>
<div class="a t" style="left:804.8px;top:649.4px;width:60px;text-align:center;font-size:9px;font-weight:bold;color:#858585">LIMIT</div>
<div class="a t" style="left:903.3px;top:566.6px;width:60px;text-align:center;font-size:17px;font-weight:bold;color:#ff9b00">Z</div>
<div class="a" style="left:891.8px;top:585px;width:83.20000000000005px;height:30.600000000000023px;background:#acacac"></div>
<svg class="a" style="left:893.8px;top:592px" width="7" height="14"><path d="M0.5 1L6 7L0.5 13Z" fill="#bdbdbd"/></svg>
<div class="a t" style="left:903.8px;top:593.1px;font-size:17.5px;color:#222">0.000</div>
<div class="a" style="left:876.8px;top:614px;width:113.60000000000002px;height:32px;background:linear-gradient(180deg,#a59d9d,#9c9494);border-radius:7px;box-shadow:0 1px 2px rgba(0,0,0,.35)"></div>
<div class="a" style="left:933.4px;top:614px;width:1px;height:32px;background:#888"></div>
<div class="a t" style="left:865.1px;top:623.8px;width:80px;text-align:center;font-size:13.7px;font-weight:bold;color:#fff">HIGH</div>
<div class="a t" style="left:921.9px;top:623.8px;width:80px;text-align:center;font-size:13.7px;font-weight:bold;color:#fff">LOW</div>
<div class="a" style="left:882px;top:647px;width:45.5px;height:13.5px;background:#363636;border-radius:0 0 3px 3px"></div>
<div class="a t" style="left:874.8px;top:649.4px;width:60px;text-align:center;font-size:9px;font-weight:bold;color:#858585">LIMIT</div>
<div class="a" style="left:938px;top:647px;width:45.799999999999955px;height:13.5px;background:#363636;border-radius:0 0 3px 3px"></div>
<div class="a t" style="left:930.9px;top:649.4px;width:60px;text-align:center;font-size:9px;font-weight:bold;color:#858585">LIMIT</div>
<div class="a t" style="left:603px;top:679.5px;width:60px;text-align:right;font-size:12px;font-weight:bold;color:#d0d0d0">Move</div>
<div class="a t" style="left:603px;top:694px;width:60px;text-align:right;font-size:12px;font-weight:bold;color:#d0d0d0">Speed</div>
<div class="a" style="left:670.5px;top:676px;width:317.5px;height:34px;background:#3c3c3c;border-radius:6px"></div>
<div class="a t" style="left:654.5px;top:689.4px;width:90px;text-align:center;font-size:10px;font-weight:bold;color:#f0f0f0">MICRO</div>
<div class="a" style="left:728.6px;top:676px;width:1px;height:34px;background:#4a4a4a"></div>
<div class="a t" style="left:712.2px;top:689.4px;width:90px;text-align:center;font-size:10px;font-weight:bold;color:#f0f0f0">SLOW</div>
<div class="a" style="left:784.8px;top:676px;width:1px;height:34px;background:#4a4a4a"></div>
<div class="a t" style="left:773.8px;top:689.4px;width:90px;text-align:center;font-size:10px;font-weight:bold;color:#f0f0f0">MEDIUM</div>
<div class="a" style="left:852.5px;top:676px;width:50.700000000000045px;height:34px;background:#ff9b00"></div>
<div class="a t" style="left:832.9px;top:689.4px;width:90px;text-align:center;font-size:10px;font-weight:bold;color:#6a4a2a">FAST</div>
<div class="a" style="left:903px;top:676px;width:1px;height:34px;background:#4a4a4a"></div>
<div class="a t" style="left:901.0px;top:689.4px;width:90px;text-align:center;font-size:10px;font-weight:bold;color:#f0f0f0">OVERDRIVE</div>
<div class="a" style="left:621.9px;top:728px;width:366.1px;height:29.8px;background:#ff9b00;border-radius:8px;box-shadow:0 1px 1px rgba(0,0,0,.3)"></div>
<div class="a" style="left:749.4px;top:728px;width:1px;height:29.8px;background:#d57d10"></div>
<div class="a" style="left:797px;top:728px;width:1px;height:29.8px;background:#d57d10"></div>
<div class="a" style="left:844.2px;top:728px;width:1px;height:29.8px;background:#d57d10"></div>
<div class="a" style="left:891px;top:728px;width:1px;height:29.8px;background:#d57d10"></div>
<div class="a t" style="left:620.6px;top:736.7px;width:130px;text-align:center;font-size:11.8px;font-weight:bold;color:#fff">SET HOME ALL</div>
<div class="a t" style="left:708.2px;top:736.7px;width:130px;text-align:center;font-size:11.8px;font-weight:bold;color:#fff">X</div>
<div class="a t" style="left:755.6px;top:736.7px;width:130px;text-align:center;font-size:11.8px;font-weight:bold;color:#fff">Y</div>
<div class="a t" style="left:802.6px;top:736.7px;width:130px;text-align:center;font-size:11.8px;font-weight:bold;color:#fff">Z</div>
<div class="a t" style="left:874.5px;top:736.7px;width:130px;text-align:center;font-size:11.8px;font-weight:bold;color:#fff">GO HOME</div>
<div class="a" style="left:628.5px;top:810px;width:133px;height:25.2px;background:#404040;border-radius:0 0 3px 3px"></div>
<div class="a t" style="left:635.0px;top:821.6px;width:120px;text-align:center;font-size:10px;font-weight:bold;color:#767676">Emergency Stop</div>
<div class="a" style="left:621.9px;top:777.2px;width:148.3px;height:43.4px;background:#6e0000;border-radius:6px;box-shadow:0 1px 2px rgba(0,0,0,.4)"></div>
<div class="a t" style="left:636.0px;top:792.7px;width:120px;text-align:center;font-size:11.8px;font-weight:bold;color:#fff">ALL STOP</div>
<div class="a t" style="left:754.5px;top:786.8px;width:80px;text-align:right;font-size:13.8px;font-weight:bold;color:#d8d8d8">Motors</div>
<div class="a t" style="left:754.5px;top:803.2px;width:80px;text-align:right;font-size:13.8px;font-weight:bold;color:#d8d8d8">Enabled</div>
<div class="a" style="left:841.4px;top:781px;width:38.2px;height:38.6px;background:#3a3a3a"></div>
<svg class="a" style="left:841px;top:781px" width="39" height="39"><circle cx="19.3" cy="19" r="16" fill="#555"/><circle cx="19.3" cy="19" r="13" fill="#19e650"/></svg>
<div class="a t" style="left:867.8px;top:786.8px;width:90px;text-align:right;font-size:13.8px;font-weight:bold;color:#d8d8d8">Backlight</div>
<div class="a t" style="left:867.8px;top:803.2px;width:90px;text-align:right;font-size:13.8px;font-weight:bold;color:#d8d8d8">Power</div>
<div class="a" style="left:961.2px;top:781px;width:38.6px;height:38.6px;background:#3a3a3a"></div>
<svg class="a" style="left:961px;top:781px" width="39" height="39"><circle cx="19.3" cy="19" r="15.5" fill="#555"/></svg>
<div class="a t" style="left:1003px;top:602px;width:60px;text-align:right;font-size:13.8px;font-weight:bold;color:#e0e0e0">Live</div>
<div class="a t" style="left:1003px;top:618px;width:60px;text-align:right;font-size:13.8px;font-weight:bold;color:#e0e0e0">View</div>
<div class="a" style="left:1071px;top:593.8px;width:146.6px;height:43.5px;background:#3a3a3a;border-radius:8px;overflow:hidden"><div class="a" style="left:73.6px;top:0;width:73px;height:44px;background:#ff9b00"></div></div>
<div class="a t" style="left:1077.5px;top:608.8px;width:60px;text-align:center;font-size:13.7px;font-weight:bold;color:#fff">OFF</div>
<div class="a t" style="left:1151.0px;top:608.8px;width:60px;text-align:center;font-size:13.7px;font-weight:bold;color:#fff">ON</div>
<div class="a" style="left:1034.2px;top:649px;width:179.8px;height:55.6px;background:#ff9b00;border-radius:10px;box-shadow:0 1px 2px rgba(0,0,0,.3)"></div>
<div class="a t" style="left:1024.5px;top:669.7px;width:200px;text-align:center;font-size:14px;font-weight:bold;color:#fff">TAKE TEST PHOTO</div>
<div class="a" style="left:1896px;top:0px;width:4px;height:600px;background:linear-gradient(180deg,#2f6e62 0px,#2f6e62 225px,#5a3a28 240px,#6a4430 600px)"></div>
<div class="a" style="left:1277px;top:0px;width:620px;height:587px;background:#f0f0f0;border-radius:7px 7px 0 0;box-shadow:0 0 0 1px rgba(0,0,0,.2)"></div>
<div class="a" style="left:1277px;top:0px;width:620px;height:25px;background:#f3f3f3;border-radius:7px 7px 0 0"></div>
<svg class="a" style="left:1285px;top:3px" width="16" height="15"><rect x="1" y="4" width="14" height="10" rx="2" fill="#2a2a2a"/><rect x="4" y="1.5" width="7" height="4" rx="1" fill="#3a3a3a"/><circle cx="8" cy="9" r="3.3" fill="#3f7fa0"/><circle cx="8" cy="9" r="1.8" fill="#1c3440"/></svg>
<div class="a t" style="left:1306.0px;top:4.9px;font-size:11.6px;color:#7a7a7a">DSLR Remote Pro for Windows - Connected to Canon EOS R100</div>
<div class="a" style="left:1776px;top:10px;width:12px;height:1px;background:#777"></div>
<div class="a" style="left:1823px;top:5px;width:10px;height:10px;border:1px solid #777;border-radius:1px"></div>
<svg class="a" style="left:1869px;top:5px" width="11" height="11"><path d="M0.5 0.5L10.5 10.5M10.5 0.5L0.5 10.5" stroke="#666" stroke-width="1.1"/></svg>
<div class="a" style="left:1277px;top:25px;width:620px;height:21px;background:#fff"></div>
<div class="a t" style="left:1284.3px;top:29.8px;font-size:11.6px;color:#555">File</div>
<div class="a t" style="left:1316.4px;top:29.8px;font-size:11.6px;color:#555">Camera</div>
<div class="a t" style="left:1371.0px;top:29.8px;font-size:11.6px;color:#555">View</div>
<div class="a t" style="left:1410.6px;top:29.8px;font-size:11.6px;color:#555">Tools</div>
<div class="a t" style="left:1452.4px;top:29.8px;font-size:11.6px;color:#555">Help</div>
<div class="a" style="left:1277px;top:46px;width:620px;height:2px;background:#9a9a9a"></div>
<div class="a" style="left:1278px;top:48px;width:1px;height:520px;background:#8a8a8a"></div>
<div class="a" style="left:1285px;top:52px;width:81.8px;height:26.6px;background:#fdfdfd;border:1.5px solid #2f86d0;border-radius:4px"></div>
<div class="a t" style="left:1280.9px;top:60.3px;width:90px;text-align:center;font-size:10.6px;color:#111">Release (F8)</div>
<div class="a" style="left:1379.4px;top:52px;width:81.2px;height:26.6px;background:#fdfdfd;border:1px solid #d0d0d0;border-radius:4px"></div>
<div class="a t" style="left:1375.0px;top:60.3px;width:90px;text-align:center;font-size:10.6px;color:#111">Preview (F9)</div>
<div class="a" style="left:1284.3px;top:88.9px;width:12.2px;height:11.6px;background:#fff;border:1px solid #555;border-radius:2px"></div>
<div class="a t" style="left:1299.8px;top:90.0px;font-size:10.6px;color:#111">Auto-bracket</div>
<div class="a" style="left:1373.4px;top:86.9px;width:61.4px;height:15.9px;background:#f7f7f7;border:1px solid #ececec;border-radius:3px"></div>
<div class="a t" style="left:1377.5px;top:89.8px;font-size:10.6px;color:#9a9a9a">Settings...</div>
<div class="a t" style="left:1283.5px;top:106.8px;font-size:10.6px;color:#111">Colorspace: sRGB</div>
<div class="a t" style="left:1283.5px;top:132.4px;font-size:10.6px;color:#111">Shutter release: AF</div>
<div class="a t" style="left:1283.5px;top:145.7px;font-size:10.6px;color:#111">AE lock button: AE lock</div>
<div class="a t" style="left:1283.8px;top:177.5px;font-size:10.6px;color:#111">Tv:</div>
<div class="a" style="left:1309.4px;top:172.6px;width:68.0px;height:20.0px;background:#fff;border:1px solid #d6d6d6;border-bottom-color:#bcbcbc;border-radius:3px"></div>
<div class="a t" style="left:1313.4px;top:177.3px;font-size:10.8px;color:#111">1/15</div>
<svg class="a" style="left:1363.4px;top:179.6px" width="10" height="6"><path d="M0.5 0.5L5 5L9.5 0.5" fill="none" stroke="#444" stroke-width="1"/></svg>
<div class="a t" style="left:1388.7px;top:177.5px;font-size:10.6px;color:#111">Av:</div>
<div class="a" style="left:1410.6px;top:172.6px;width:52.40000000000009px;height:20.0px;background:#fff;border:1px solid #d6d6d6;border-bottom-color:#bcbcbc;border-radius:3px"></div>
<div class="a t" style="left:1414.6px;top:177.3px;font-size:10.8px;color:#111">2.8</div>
<svg class="a" style="left:1449px;top:179.6px" width="10" height="6"><path d="M0.5 0.5L5 5L9.5 0.5" fill="none" stroke="#444" stroke-width="1"/></svg>
<div class="a t" style="left:1283.5px;top:202.7px;font-size:10.6px;color:#111">Mode: Manual</div>
<div class="a t" style="left:1382.0px;top:202.7px;font-size:10.6px;color:#111">ISO:</div>
<div class="a" style="left:1410.6px;top:197px;width:52.40000000000009px;height:19.80000000000001px;background:#fff;border:1px solid #d6d6d6;border-bottom-color:#bcbcbc;border-radius:3px"></div>
<div class="a t" style="left:1414.6px;top:201.6px;font-size:10.8px;color:#111">1600</div>
<svg class="a" style="left:1449px;top:203.9px" width="10" height="6"><path d="M0.5 0.5L5 5L9.5 0.5" fill="none" stroke="#444" stroke-width="1"/></svg>
<div class="a t" style="left:1283.5px;top:226.2px;font-size:10.6px;color:#111">Exposure compensation:</div>
<div class="a" style="left:1407.6px;top:221.5px;width:55.40000000000009px;height:19.900000000000006px;background:#f5f5f5;border:1px solid #e6e6e6;border-radius:3px"></div>
<div class="a t" style="left:1412.6px;top:226.2px;font-size:10.8px;color:#9a9a9a">N/A</div>
<svg class="a" style="left:1449px;top:228.45px" width="10" height="6"><path d="M0.5 0.5L5 5L9.5 0.5" fill="none" stroke="#bbb" stroke-width="1"/></svg>
<div class="a t" style="left:1283.5px;top:250.8px;font-size:10.6px;color:#111">Size/Quality:</div>
<div class="a" style="left:1354.5px;top:245.7px;width:108.5px;height:19.600000000000023px;background:#fff;border:1px solid #d6d6d6;border-bottom-color:#bcbcbc;border-radius:3px"></div>
<div class="a t" style="left:1358.5px;top:250.2px;font-size:10.8px;color:#111">Large/fine</div>
<svg class="a" style="left:1449px;top:252.5px" width="10" height="6"><path d="M0.5 0.5L5 5L9.5 0.5" fill="none" stroke="#444" stroke-width="1"/></svg>
<div class="a t" style="left:1283.5px;top:275.0px;font-size:10.6px;color:#111">White balance:</div>
<div class="a" style="left:1360.5px;top:269.6px;width:102.5px;height:19.899999999999977px;background:#fff;border:1px solid #d6d6d6;border-bottom-color:#bcbcbc;border-radius:3px"></div>
<div class="a t" style="left:1364.5px;top:274.3px;font-size:10.8px;color:#111">Flash</div>
<svg class="a" style="left:1449px;top:276.55px" width="10" height="6"><path d="M0.5 0.5L5 5L9.5 0.5" fill="none" stroke="#444" stroke-width="1"/></svg>
<div class="a t" style="left:1283.5px;top:298.1px;font-size:10.6px;color:#111">Color Temperature:</div>
<div class="a" style="left:1386.7px;top:294px;width:75.6px;height:18.5px;background:#f5f5f5;border:1px solid #e8e8e8;border-radius:2px"></div>
<div class="a t" style="left:1391.5px;top:298.1px;font-size:10.6px;color:#9a9a9a">5500</div>
<div class="a t" style="left:1283.5px;top:323.9px;font-size:10.6px;color:#111">Metering Mode:</div>
<div class="a" style="left:1360.5px;top:318.8px;width:102.5px;height:19.899999999999977px;background:#fff;border:1px solid #d6d6d6;border-bottom-color:#bcbcbc;border-radius:3px"></div>
<div class="a t" style="left:1364.5px;top:323.5px;font-size:10.8px;color:#111">Evaluative</div>
<svg class="a" style="left:1449px;top:325.75px" width="10" height="6"><path d="M0.5 0.5L5 5L9.5 0.5" fill="none" stroke="#444" stroke-width="1"/></svg>
<div class="a t" style="left:1283.5px;top:347.8px;font-size:10.6px;color:#111">Drive mode:</div>
<div class="a" style="left:1356.2px;top:343px;width:106.79999999999995px;height:20px;background:#fff;border:1px solid #d6d6d6;border-bottom-color:#bcbcbc;border-radius:3px"></div>
<div class="a t" style="left:1360.2px;top:347.7px;font-size:10.8px;color:#111">Single shot</div>
<svg class="a" style="left:1449px;top:350.0px" width="10" height="6"><path d="M0.5 0.5L5 5L9.5 0.5" fill="none" stroke="#444" stroke-width="1"/></svg>
<div class="a t" style="left:1283.5px;top:372.7px;font-size:10.6px;color:#111">AF Mode:</div>
<div class="a" style="left:1335.3px;top:368px;width:127.70000000000005px;height:19.5px;background:#fff;border:1px solid #d6d6d6;border-bottom-color:#bcbcbc;border-radius:3px"></div>
<div class="a t" style="left:1339.3px;top:372.5px;font-size:10.8px;color:#111">Live 1-point AF</div>
<svg class="a" style="left:1449px;top:374.75px" width="10" height="6"><path d="M0.5 0.5L5 5L9.5 0.5" fill="none" stroke="#444" stroke-width="1"/></svg>
<div class="a t" style="left:1283.5px;top:397.5px;font-size:10.6px;color:#111">AF detail:</div>
<div class="a" style="left:1335.3px;top:391.8px;width:127.70000000000005px;height:19.899999999999977px;background:#fff;border:1px solid #d6d6d6;border-bottom-color:#bcbcbc;border-radius:3px"></div>
<div class="a t" style="left:1339.3px;top:396.5px;font-size:10.8px;color:#111">N/A</div>
<svg class="a" style="left:1449px;top:398.75px" width="10" height="6"><path d="M0.5 0.5L5 5L9.5 0.5" fill="none" stroke="#444" stroke-width="1"/></svg>
<div class="a t" style="left:1283.5px;top:420.8px;font-size:10.6px;color:#111">Picture style:</div>
<div class="a" style="left:1360.5px;top:415.3px;width:102.5px;height:19.899999999999977px;background:#fff;border:1px solid #d6d6d6;border-bottom-color:#bcbcbc;border-radius:3px"></div>
<div class="a t" style="left:1364.5px;top:420.0px;font-size:10.8px;color:#111">Neutral</div>
<svg class="a" style="left:1449px;top:422.25px" width="10" height="6"><path d="M0.5 0.5L5 5L9.5 0.5" fill="none" stroke="#444" stroke-width="1"/></svg>
<svg class="a" style="left:1284.1px;top:439.1px" width="180" height="101.5"><rect x="0.5" y="0.5" width="179" height="100.5" fill="#0aa0bb" stroke="#111" stroke-width="1"/>
<polygon points="7.2,100.6 12.1,33.7 15.3,41.2 19.1,60.7 21.8,22.9 24.5,9.9 27.2,44.5 32.6,39.1 36.9,47.7 41.2,60.7 45.6,82.3 52.0,87.7 58.5,82.3 62.8,85.5 71.5,89.8 82.3,87.7 93.1,89.8 103.9,90.9 110.3,88.7 116.8,93.1 125.4,97.4 131.9,99.5 138.4,90.9 143.8,85.5 147.0,93.1 152.4,89.8 157.8,98.5 164.3,93.1 169.7,82.3 172.9,100.6" fill="#6b6b6b"/>
<line x1="72.5" y1="1" x2="72.5" y2="100" stroke="#0b7d96" stroke-width="1"/><line x1="108.5" y1="1" x2="108.5" y2="100" stroke="#0b7d96" stroke-width="1"/><line x1="144.3" y1="1" x2="144.3" y2="100" stroke="#0b7d96" stroke-width="1"/>
<polyline points="21.8,100.6 27.2,47.7 28.3,2.4 36.9,2.4 43.4,80.1 45.6,82.3 52.0,84.4 57.4,68.2 61.8,73.6 65.0,88.7 71.5,89.8 84.4,88.7 93.1,90.9 101.7,92.0 110.3,89.8 116.8,93.1 125.4,97.4 134.1,100.6 155.7,100.6 161.1,82.3 168.6,21.8 172.9,93.1 174.0,100.6" fill="none" stroke="#c83c3c" stroke-width="1"/>
<polyline points="14.3,100.6 19.1,3.5 25.0,2.4 28.3,39.1 33.1,73.6 39.1,54.2 43.4,89.8 45.6,92.0 52.0,86.6 60.7,88.7 71.5,89.8 86.6,88.7 93.1,93.1 103.9,99.5 114.6,100.1 130.8,99.5 138.4,88.7 147.0,82.3 152.4,56.4 157.8,82.3 160.0,100.6" fill="none" stroke="#3cf03c" stroke-width="1"/>
<polyline points="6.7,100.6 11.0,2.4 21.3,2.4 23.4,71.5 26.1,84.4 28.3,86.6 41.2,83.3 60.7,86.6 71.5,93.1 82.3,98.5 87.7,98.5 93.1,90.9 101.7,84.4 108.2,68.2 112.5,74.7 116.8,99.5 121.1,100.6" fill="none" stroke="#1a28d8" stroke-width="1.2"/>
<line x1="1" y1="52" x2="1" y2="100" stroke="#10106a" stroke-width="2"/>
</svg>
<div class="a" style="left:1285.6px;top:546px;width:82.9px;height:16.5px;background:#fdfdfd;border:1px solid #d3d3d3;border-radius:3px"></div>
<div class="a t" style="left:1282.0px;top:549.1px;width:90px;text-align:center;font-size:10.6px;color:#111">&lt;- Prev Image</div>
<div class="a" style="left:1378.4px;top:546px;width:82.9px;height:16.5px;background:#fdfdfd;border:1px solid #d3d3d3;border-radius:3px"></div>
<div class="a t" style="left:1374.8px;top:549.1px;width:90px;text-align:center;font-size:10.6px;color:#111">Next Image -&gt;</div>
<div class="a" style="left:1277px;top:567px;width:620px;height:1px;background:#dcdcdc"></div>
<div class="a t" style="left:1279.3px;top:572.9px;font-size:11.5px;color:#111">Saved: C:/gigamacro/testimages/6-17-2025\testphoto_11368.JPG (10.1MB) - 1/8sec @ F6.3, ISO</div>
<div class="a" style="left:1781.3px;top:569px;width:1px;height:16px;background:#d0d0d0"></div>
<div class="a t" style="left:1786.0px;top:572.9px;font-size:11.5px;color:#111">RGB:</div>
<div class="a" style="left:1877.4px;top:569px;width:1px;height:16px;background:#d0d0d0"></div>
<div class="a" style="left:1467.3px;top:48px;width:427.7px;height:284.2px;overflow:hidden"><div class="a" style="left:0.0px;top:0.0px;width:427.7px;height:27.3px;background:linear-gradient(90deg,#3e3022 0%,#4a3826 12%,#6a4a2a 30%,#6c4c2a 100%)"></div><div class="a" style="left:0.0px;top:27.3px;width:427.7px;height:23.0px;background:linear-gradient(180deg,#957a5a,#84694c 55%,#8c7656)"></div><div class="a" style="left:0.0px;top:50.3px;width:427.7px;height:166.8px;background:#322a20"></div><div class="a" style="left:0.0px;top:217.1px;width:427.7px;height:21.5px;background:linear-gradient(180deg,#6a5a48,#8a7658 50%,#7c6a52)"></div><div class="a" style="left:0.0px;top:238.6px;width:427.7px;height:45.6px;background:linear-gradient(90deg,#d8c08c,#e2cc98 50%,#d8c08c)"></div><div class="a" style="left:8.1px;top:50.3px;width:1.8px;height:35.3px;background:#c9b596"></div><div class="a" style="left:21.5px;top:50.3px;width:1.8px;height:35.3px;background:#c9b596"></div><div class="a" style="left:34.9px;top:50.3px;width:1.8px;height:35.3px;background:#c9b596"></div><div class="a" style="left:48.3px;top:50.3px;width:1.8px;height:35.3px;background:#c9b596"></div><div class="a" style="left:61.6px;top:50.3px;width:1.8px;height:43.2px;background:#c9b596"></div><div class="a" style="left:75.0px;top:50.3px;width:1.8px;height:35.3px;background:#c9b596"></div><div class="a" style="left:88.4px;top:50.3px;width:1.8px;height:35.3px;background:#c9b596"></div><div class="a" style="left:101.8px;top:50.3px;width:1.8px;height:35.3px;background:#c9b596"></div><div class="a" style="left:115.2px;top:50.3px;width:1.8px;height:35.3px;background:#c9b596"></div><div class="a" style="left:128.6px;top:50.3px;width:1.8px;height:53.5px;background:#c9b596"></div><div class="a" style="left:142.0px;top:50.3px;width:1.8px;height:35.3px;background:#c9b596"></div><div class="a" style="left:155.4px;top:50.3px;width:1.8px;height:35.3px;background:#c9b596"></div><div class="a" style="left:168.8px;top:50.3px;width:1.8px;height:35.3px;background:#c9b596"></div><div class="a" style="left:182.2px;top:50.3px;width:1.8px;height:35.3px;background:#c9b596"></div><div class="a" style="left:195.5px;top:50.3px;width:1.8px;height:43.2px;background:#c9b596"></div><div class="a" style="left:208.9px;top:50.3px;width:1.8px;height:35.3px;background:#c9b596"></div><div class="a" style="left:222.3px;top:50.3px;width:1.8px;height:35.3px;background:#c9b596"></div><div class="a" style="left:235.7px;top:50.3px;width:1.8px;height:35.3px;background:#c9b596"></div><div class="a" style="left:249.1px;top:50.3px;width:1.8px;height:35.3px;background:#c9b596"></div><div class="a" style="left:262.5px;top:50.3px;width:1.8px;height:53.5px;background:#c9b596"></div><div class="a" style="left:275.9px;top:50.3px;width:1.8px;height:35.3px;background:#c9b596"></div><div class="a" style="left:289.3px;top:50.3px;width:1.8px;height:35.3px;background:#c9b596"></div><div class="a" style="left:302.7px;top:50.3px;width:1.8px;height:35.3px;background:#c9b596"></div><div class="a" style="left:316.1px;top:50.3px;width:1.8px;height:35.3px;background:#c9b596"></div><div class="a" style="left:329.5px;top:50.3px;width:1.8px;height:43.2px;background:#c9b596"></div><div class="a" style="left:342.8px;top:50.3px;width:1.8px;height:35.3px;background:#c9b596"></div><div class="a" style="left:356.2px;top:50.3px;width:1.8px;height:35.3px;background:#c9b596"></div><div class="a" style="left:369.6px;top:50.3px;width:1.8px;height:35.3px;background:#c9b596"></div><div class="a" style="left:383.0px;top:50.3px;width:1.8px;height:35.3px;background:#c9b596"></div><div class="a" style="left:396.4px;top:50.3px;width:1.8px;height:53.5px;background:#c9b596"></div><div class="a" style="left:409.8px;top:50.3px;width:1.8px;height:35.3px;background:#c9b596"></div><div class="a" style="left:423.2px;top:50.3px;width:1.8px;height:35.3px;background:#c9b596"></div><div class="a t" style="left:91.7px;top:109.2px;width:80px;text-align:center;font-size:34px;line-height:34px;font-weight:bold;color:#cbb99e;transform:scaleX(0.9)">10</div><div class="a t" style="left:223.4px;top:109.2px;width:80px;text-align:center;font-size:34px;line-height:34px;font-weight:bold;color:#cbb99e;transform:scaleX(0.9)">20</div><div class="a t" style="left:358.1px;top:109.2px;width:80px;text-align:center;font-size:34px;line-height:34px;font-weight:bold;color:#cbb99e;transform:scaleX(0.9)">30</div><div class="a t" style="left:314.7px;top:146.8px;width:40px;text-align:center;font-size:32px;line-height:32px;font-weight:bold;color:#cbb99e;transform:scaleX(0.85)">1</div><div class="a" style="left:29.5px;top:193.6px;width:1.8px;height:23.5px;background:#c9b596"></div><div class="a" style="left:63.3px;top:193.6px;width:1.8px;height:23.5px;background:#c9b596"></div><div class="a" style="left:97.2px;top:193.6px;width:1.8px;height:23.5px;background:#c9b596"></div><div class="a" style="left:131.0px;top:193.6px;width:1.8px;height:23.5px;background:#c9b596"></div><div class="a" style="left:164.9px;top:193.6px;width:1.8px;height:23.5px;background:#c9b596"></div><div class="a" style="left:198.7px;top:193.6px;width:1.8px;height:23.5px;background:#c9b596"></div><div class="a" style="left:232.5px;top:193.6px;width:1.8px;height:23.5px;background:#c9b596"></div><div class="a" style="left:266.4px;top:193.6px;width:1.8px;height:23.5px;background:#c9b596"></div><div class="a" style="left:300.2px;top:193.6px;width:1.8px;height:23.5px;background:#c9b596"></div><div class="a" style="left:334.1px;top:182.7px;width:1.8px;height:34.4px;background:#c9b596"></div><div class="a" style="left:367.9px;top:193.6px;width:1.8px;height:23.5px;background:#c9b596"></div><div class="a" style="left:401.7px;top:193.6px;width:1.8px;height:23.5px;background:#c9b596"></div><div class="a" style="left:83.9px;top:276.0px;width:35.3px;height:10.2px;background:#4f9a44;opacity:.85;border-radius:40% 40% 0 0"></div><div class="a" style="left:134.0px;top:276.0px;width:23.5px;height:10.2px;background:#4f9a44;opacity:.85;border-radius:40% 40% 0 0"></div><div class="a" style="left:175.2px;top:276.0px;width:23.5px;height:10.2px;background:#4f9a44;opacity:.85;border-radius:40% 40% 0 0"></div><div class="a" style="left:216.4px;top:276.0px;width:23.5px;height:10.2px;background:#4f9a44;opacity:.85;border-radius:40% 40% 0 0"></div><div class="a" style="left:251.7px;top:276.0px;width:23.5px;height:10.2px;background:#4f9a44;opacity:.85;border-radius:40% 40% 0 0"></div><div class="a" style="left:289.9px;top:276.0px;width:23.5px;height:10.2px;background:#4f9a44;opacity:.85;border-radius:40% 40% 0 0"></div><div class="a" style="left:331.1px;top:276.0px;width:14.7px;height:10.2px;background:#4f9a44;opacity:.85;border-radius:40% 40% 0 0"></div><div class="a" style="left:363.5px;top:276.0px;width:23.5px;height:10.2px;background:#4f9a44;opacity:.85;border-radius:40% 40% 0 0"></div><div class="a" style="left:404.7px;top:276.0px;width:23.5px;height:10.2px;background:#4f9a44;opacity:.85;border-radius:40% 40% 0 0"></div><div class="a" style="left:-9px;top:138.0px;width:14px;height:22.0px;border:3px solid #cbb99e;border-radius:50%"></div><div class="a" style="left:213.5px;top:0.0px;width:1.2px;height:284.2px;background:#22e022"></div><div class="a" style="left:0.0px;top:142.2px;width:427.7px;height:1.2px;background:#22e022"></div></div>
<div class="a" style="left:1277.7px;top:601px;width:630px;height:420px;background:#f0f0f0;border-radius:7px 0 0 0;box-shadow:0 0 0 1px rgba(0,0,0,.2)"></div>
<div class="a" style="left:1277.7px;top:601px;width:630px;height:30px;background:#f3f3f3;border-radius:7px 0 0 0"></div>
<svg class="a" style="left:1286px;top:607px" width="17" height="16"><rect x="1" y="4" width="15" height="11" rx="2" fill="#2a2a2a"/><rect x="4" y="1.5" width="8" height="4" rx="1" fill="#3a3a3a"/><circle cx="8.5" cy="9.5" r="3.5" fill="#3f7fa0"/><circle cx="8.5" cy="9.5" r="1.9" fill="#1c3440"/></svg>
<div class="a t" style="left:1307.0px;top:609.5px;font-size:11.8px;color:#7a7a7a">Live View: full frame</div>
<div class="a" style="left:1782px;top:615px;width:12px;height:1px;background:#777"></div>
<div class="a" style="left:1827.5px;top:610px;width:10px;height:10px;border:1px solid #777;border-radius:1px"></div>
<svg class="a" style="left:1873px;top:610px" width="11" height="11"><path d="M0.5 0.5L10.5 10.5M10.5 0.5L0.5 10.5" stroke="#666" stroke-width="1.1"/></svg>
<div class="a" style="left:1277.7px;top:631px;width:465.9px;height:310.2px;overflow:hidden"><div class="a" style="left:0.0px;top:0.0px;width:465.9px;height:29.0px;background:linear-gradient(90deg,#4a3a28 0%,#5e4630 8%,#785832 25%,#7a5a34 100%)"></div><div class="a" style="left:0.0px;top:29.0px;width:465.9px;height:25.0px;background:linear-gradient(180deg,#a09078,#8e7e66 55%,#9a8a72)"></div><div class="a" style="left:0.0px;top:54.0px;width:465.9px;height:182.5px;background:#38312a"></div><div class="a" style="left:0.0px;top:236.5px;width:465.9px;height:23.3px;background:linear-gradient(180deg,#5e5448,#7a6c5c 50%,#6e6252)"></div><div class="a" style="left:0.0px;top:259.8px;width:465.9px;height:50.4px;background:linear-gradient(90deg,#efe8d0,#f6f2e2 50%,#efe8d0)"></div><div class="a" style="left:9.7px;top:54.0px;width:2.4px;height:38.4px;background:#d2c6b2"></div><div class="a" style="left:24.3px;top:54.0px;width:2.4px;height:38.4px;background:#d2c6b2"></div><div class="a" style="left:38.8px;top:54.0px;width:2.4px;height:38.4px;background:#d2c6b2"></div><div class="a" style="left:53.3px;top:54.0px;width:2.4px;height:38.4px;background:#d2c6b2"></div><div class="a" style="left:67.8px;top:54.0px;width:2.4px;height:48.4px;background:#d2c6b2"></div><div class="a" style="left:82.4px;top:54.0px;width:2.4px;height:38.4px;background:#d2c6b2"></div><div class="a" style="left:96.9px;top:54.0px;width:2.4px;height:38.4px;background:#d2c6b2"></div><div class="a" style="left:111.4px;top:54.0px;width:2.4px;height:38.4px;background:#d2c6b2"></div><div class="a" style="left:126.0px;top:54.0px;width:2.4px;height:38.4px;background:#d2c6b2"></div><div class="a" style="left:140.5px;top:54.0px;width:2.4px;height:58.4px;background:#d2c6b2"></div><div class="a" style="left:155.0px;top:54.0px;width:2.4px;height:38.4px;background:#d2c6b2"></div><div class="a" style="left:169.6px;top:54.0px;width:2.4px;height:38.4px;background:#d2c6b2"></div><div class="a" style="left:184.1px;top:54.0px;width:2.4px;height:38.4px;background:#d2c6b2"></div><div class="a" style="left:198.6px;top:54.0px;width:2.4px;height:38.4px;background:#d2c6b2"></div><div class="a" style="left:213.2px;top:54.0px;width:2.4px;height:48.4px;background:#d2c6b2"></div><div class="a" style="left:227.7px;top:54.0px;width:2.4px;height:38.4px;background:#d2c6b2"></div><div class="a" style="left:242.2px;top:54.0px;width:2.4px;height:38.4px;background:#d2c6b2"></div><div class="a" style="left:256.7px;top:54.0px;width:2.4px;height:38.4px;background:#d2c6b2"></div><div class="a" style="left:271.3px;top:54.0px;width:2.4px;height:38.4px;background:#d2c6b2"></div><div class="a" style="left:285.8px;top:54.0px;width:2.4px;height:58.4px;background:#d2c6b2"></div><div class="a" style="left:300.3px;top:54.0px;width:2.4px;height:38.4px;background:#d2c6b2"></div><div class="a" style="left:314.9px;top:54.0px;width:2.4px;height:38.4px;background:#d2c6b2"></div><div class="a" style="left:329.4px;top:54.0px;width:2.4px;height:38.4px;background:#d2c6b2"></div><div class="a" style="left:343.9px;top:54.0px;width:2.4px;height:38.4px;background:#d2c6b2"></div><div class="a" style="left:358.5px;top:54.0px;width:2.4px;height:48.4px;background:#d2c6b2"></div><div class="a" style="left:373.0px;top:54.0px;width:2.4px;height:38.4px;background:#d2c6b2"></div><div class="a" style="left:387.5px;top:54.0px;width:2.4px;height:38.4px;background:#d2c6b2"></div><div class="a" style="left:402.0px;top:54.0px;width:2.4px;height:38.4px;background:#d2c6b2"></div><div class="a" style="left:416.6px;top:54.0px;width:2.4px;height:38.4px;background:#d2c6b2"></div><div class="a" style="left:431.1px;top:54.0px;width:2.4px;height:58.4px;background:#d2c6b2"></div><div class="a" style="left:445.6px;top:54.0px;width:2.4px;height:38.4px;background:#d2c6b2"></div><div class="a" style="left:460.2px;top:54.0px;width:2.4px;height:38.4px;background:#d2c6b2"></div><div class="a t" style="left:104.1px;top:118.8px;width:80px;text-align:center;font-size:36.3px;line-height:36.3px;font-weight:bold;color:#d4c8b4;transform:scaleX(0.92)">10</div><div class="a t" style="left:246.0px;top:118.8px;width:80px;text-align:center;font-size:36.3px;line-height:36.3px;font-weight:bold;color:#d4c8b4;transform:scaleX(0.92)">20</div><div class="a t" style="left:393.8px;top:118.8px;width:80px;text-align:center;font-size:36.3px;line-height:36.3px;font-weight:bold;color:#d4c8b4;transform:scaleX(0.92)">30</div><div class="a t" style="left:345.0px;top:159.0px;width:40px;text-align:center;font-size:36px;line-height:36px;font-weight:bold;color:#d4c8b4;transform:scaleX(0.85)">1</div><div class="a" style="left:32.8px;top:210.8px;width:2.4px;height:25.7px;background:#d2c6b2"></div><div class="a" style="left:69.7px;top:210.8px;width:2.4px;height:25.7px;background:#d2c6b2"></div><div class="a" style="left:106.5px;top:210.8px;width:2.4px;height:25.7px;background:#d2c6b2"></div><div class="a" style="left:143.4px;top:210.8px;width:2.4px;height:25.7px;background:#d2c6b2"></div><div class="a" style="left:180.2px;top:210.8px;width:2.4px;height:25.7px;background:#d2c6b2"></div><div class="a" style="left:217.1px;top:210.8px;width:2.4px;height:25.7px;background:#d2c6b2"></div><div class="a" style="left:254.0px;top:210.8px;width:2.4px;height:25.7px;background:#d2c6b2"></div><div class="a" style="left:290.8px;top:210.8px;width:2.4px;height:25.7px;background:#d2c6b2"></div><div class="a" style="left:327.7px;top:210.8px;width:2.4px;height:25.7px;background:#d2c6b2"></div><div class="a" style="left:364.5px;top:198.5px;width:2.4px;height:38.0px;background:#d2c6b2"></div><div class="a" style="left:401.4px;top:210.8px;width:2.4px;height:25.7px;background:#d2c6b2"></div><div class="a" style="left:438.3px;top:210.8px;width:2.4px;height:25.7px;background:#d2c6b2"></div><div class="a" style="left:92.4px;top:301.0px;width:20.0px;height:11.2px;background:#a8d090;opacity:.45;border-radius:40% 40% 0 0"></div><div class="a" style="left:139.1px;top:301.0px;width:26.7px;height:11.2px;background:#a8d090;opacity:.45;border-radius:40% 40% 0 0"></div><div class="a" style="left:185.8px;top:301.0px;width:26.7px;height:11.2px;background:#a8d090;opacity:.45;border-radius:40% 40% 0 0"></div><div class="a" style="left:232.5px;top:301.0px;width:23.3px;height:11.2px;background:#a8d090;opacity:.45;border-radius:40% 40% 0 0"></div><div class="a" style="left:275.8px;top:301.0px;width:23.3px;height:11.2px;background:#a8d090;opacity:.45;border-radius:40% 40% 0 0"></div><div class="a" style="left:322.5px;top:301.0px;width:23.3px;height:11.2px;background:#a8d090;opacity:.45;border-radius:40% 40% 0 0"></div><div class="a" style="left:370.9px;top:301.0px;width:15.0px;height:11.2px;background:#a8d090;opacity:.45;border-radius:40% 40% 0 0"></div><div class="a" style="left:402.6px;top:301.0px;width:23.3px;height:11.2px;background:#a8d090;opacity:.45;border-radius:40% 40% 0 0"></div><div class="a" style="left:445.9px;top:301.0px;width:20.0px;height:11.2px;background:#a8d090;opacity:.45;border-radius:40% 40% 0 0"></div><div class="a" style="left:-9px;top:143.0px;width:14px;height:24.0px;border:3px solid #d4c8b4;border-radius:50%"></div><div class="a" style="left:233.0px;top:0.0px;width:1.2px;height:310.2px;background:#22e022"></div><div class="a" style="left:0.0px;top:154.6px;width:465.9px;height:1.2px;background:#22e022"></div></div>
<div class="a" style="left:1580.9px;top:770.1px;width:94.4px;height:62.7px;border:1.5px solid #f0f0f0;box-shadow:0 0 0 1px rgba(0,0,0,.6)"></div>
<div class="a" style="left:1278px;top:945.2px;width:116.7px;height:75px;background:#0a9cb5;border:1px solid #1a1a1a"></div>
<div class="a" style="left:1353.4px;top:979.5px;width:24px;height:15.6px;background:#fff"></div>
<div class="a" style="left:1399.3px;top:972px;width:72.40000000000009px;height:21px;background:#cce4f7;border:1px solid #2a84d2;border-radius:3px"></div>
<div class="a t" style="left:1395.5px;top:977.1px;width:80px;text-align:center;font-size:11px;color:#111">Release</div>
<div class="a" style="left:1477.6px;top:972px;width:71.60000000000014px;height:21px;background:#fdfdfd;border:1px solid #d0d0d0;border-radius:3px"></div>
<div class="a t" style="left:1473.4px;top:977.1px;width:80px;text-align:center;font-size:11px;color:#111">Preview</div>
<div class="a" style="left:1555px;top:972px;width:33px;height:21px;background:#fdfdfd;border:1px solid #d0d0d0;border-radius:3px"></div>
<div class="a t" style="left:1531.5px;top:977.1px;width:80px;text-align:center;font-size:11px;color:#111">Video</div>
<div class="a" style="left:1594.7px;top:972px;width:32.0px;height:21px;background:#f5f5f5;border:1px solid #e3e3e3;border-radius:3px"></div>
<div class="a t" style="left:1570.7px;top:977.1px;width:80px;text-align:center;font-size:11px;color:#9a9a9a">Rec</div>
<div class="a" style="left:1399.3px;top:998.5px;width:32.700000000000045px;height:21.5px;background:#fdfdfd;border:1px solid #d0d0d0;border-radius:3px"></div>
<div class="a t" style="left:1375.7px;top:1003.9px;width:80px;text-align:center;font-size:11px;color:#111">&lt;&lt;&lt;</div>
<div class="a" style="left:1438.4px;top:998.5px;width:32.899999999999864px;height:21.5px;background:#fdfdfd;border:1px solid #d0d0d0;border-radius:3px"></div>
<div class="a t" style="left:1414.8px;top:1003.9px;width:80px;text-align:center;font-size:11px;color:#111">&lt;&lt;</div>
<div class="a" style="left:1477.6px;top:998.5px;width:32.40000000000009px;height:21.5px;background:#fdfdfd;border:1px solid #d0d0d0;border-radius:3px"></div>
<div class="a t" style="left:1453.8px;top:1003.9px;width:80px;text-align:center;font-size:11px;color:#111">&lt;</div>
<div class="a" style="left:1516.4px;top:998.5px;width:32.399999999999864px;height:21.5px;background:#fdfdfd;border:1px solid #d0d0d0;border-radius:3px"></div>
<div class="a t" style="left:1492.6px;top:1003.9px;width:80px;text-align:center;font-size:11px;color:#111">&gt;</div>
<div class="a" style="left:1555.5px;top:998.5px;width:32.5px;height:21.5px;background:#fdfdfd;border:1px solid #d0d0d0;border-radius:3px"></div>
<div class="a t" style="left:1531.8px;top:1003.9px;width:80px;text-align:center;font-size:11px;color:#111">&gt;&gt;</div>
<div class="a" style="left:1594.3px;top:998.5px;width:32.700000000000045px;height:21.5px;background:#fdfdfd;border:1px solid #d0d0d0;border-radius:3px"></div>
<div class="a t" style="left:1570.7px;top:1003.9px;width:80px;text-align:center;font-size:11px;color:#111">&gt;&gt;&gt;</div>
<div class="a" style="left:1632.2px;top:970.4000000000001px;width:12.6px;height:12.6px;background:#fff;border:1px solid #555;border-radius:2px"></div>
<div class="a t" style="left:1647.3px;top:971.6px;font-size:10.5px;color:#111">Histogram</div>
<div class="a" style="left:1632.2px;top:988.8000000000001px;width:12.6px;height:12.6px;background:#fff;border:1px solid #555;border-radius:2px"></div>
<div class="a t" style="left:1647.3px;top:990.0px;font-size:10.5px;color:#111">DoF preview</div>
<div class="a" style="left:1632.2px;top:1006.5px;width:12.6px;height:12.6px;background:#fff;border:1px solid #555;border-radius:2px"></div>
<div class="a t" style="left:1647.3px;top:1007.7px;font-size:10.5px;color:#111">Zoom</div>
</body></html>
